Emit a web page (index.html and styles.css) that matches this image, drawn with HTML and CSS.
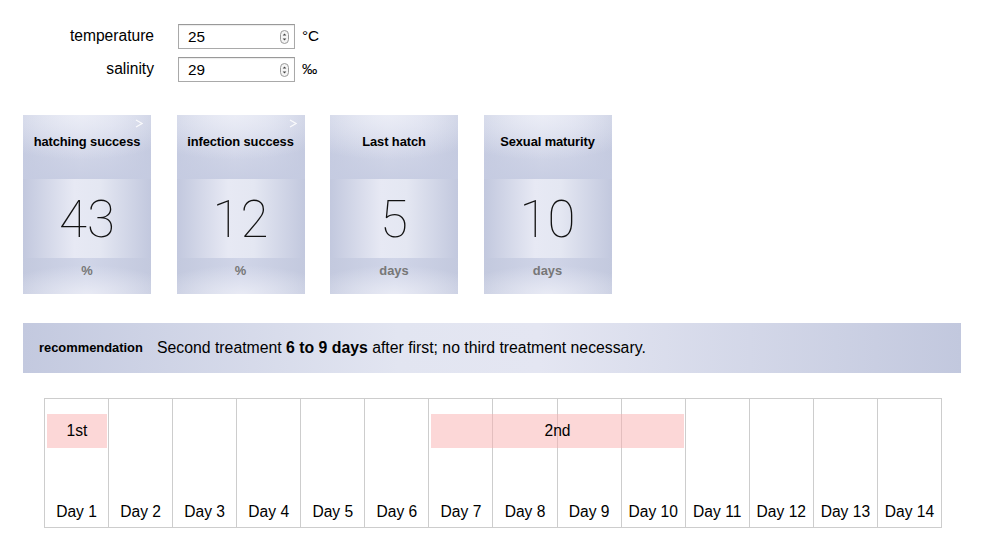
FILE: index.html
```html
<!DOCTYPE html>
<html>
<head>
<meta charset="utf-8">
<link rel="stylesheet" href="styles.css">
</head>
<body>
<div class="params">
  <div class="param-row">
    <span class="param-label">temperature</span>
    <div class="num-input"><span class="num-val">25</span>
      <svg class="spin" width="9" height="14" viewBox="0 0 9 14"><rect x="0.5" y="0.5" width="8" height="13" rx="4" fill="#f4f4f4" stroke="#9a9a9a"/><path d="M2.7 5.6 L4.5 3.4 L6.3 5.6 Z" fill="#444"/><path d="M2.7 8.4 L4.5 10.6 L6.3 8.4 Z" fill="#444"/></svg>
    </div>
    <span class="param-unit">°C</span>
  </div>
  <div class="param-row">
    <span class="param-label">salinity</span>
    <div class="num-input"><span class="num-val">29</span>
      <svg class="spin" width="9" height="14" viewBox="0 0 9 14"><rect x="0.5" y="0.5" width="8" height="13" rx="4" fill="#f4f4f4" stroke="#9a9a9a"/><path d="M2.7 5.6 L4.5 3.4 L6.3 5.6 Z" fill="#444"/><path d="M2.7 8.4 L4.5 10.6 L6.3 8.4 Z" fill="#444"/></svg>
    </div>
    <span class="param-unit">‰</span>
  </div>
</div>

<div class="cards">
  <div class="card">
    <div class="card-head">hatching success
      <svg class="chev" width="8" height="9" viewBox="0 0 8 9"><path d="M1 1 L7 4.5 L1 8" fill="none" stroke="#fff" stroke-width="1.3"/></svg>
    </div>
    <div class="card-value">43</div>
    <div class="card-unit">%</div>
  </div>
  <div class="card">
    <div class="card-head">infection success
      <svg class="chev" width="8" height="9" viewBox="0 0 8 9"><path d="M1 1 L7 4.5 L1 8" fill="none" stroke="#fff" stroke-width="1.3"/></svg>
    </div>
    <div class="card-value">12</div>
    <div class="card-unit">%</div>
  </div>
  <div class="card">
    <div class="card-head">Last hatch</div>
    <div class="card-value">5</div>
    <div class="card-unit">days</div>
  </div>
  <div class="card">
    <div class="card-head">Sexual maturity</div>
    <div class="card-value">10</div>
    <div class="card-unit">days</div>
  </div>
</div>

<div class="recommendation">
  <span class="rec-label">recommendation</span>
  <span class="rec-text">Second treatment <b>6 to 9 days</b> after first; no third treatment necessary.</span>
</div>

<div class="timeline">
  <div class="day">Day 1</div>
  <div class="day">Day 2</div>
  <div class="day">Day 3</div>
  <div class="day">Day 4</div>
  <div class="day">Day 5</div>
  <div class="day">Day 6</div>
  <div class="day">Day 7</div>
  <div class="day">Day 8</div>
  <div class="day">Day 9</div>
  <div class="day">Day 10</div>
  <div class="day">Day 11</div>
  <div class="day">Day 12</div>
  <div class="day">Day 13</div>
  <div class="day">Day 14</div>
  <div class="treat treat-1">1st</div>
  <div class="treat treat-2">2nd</div>
</div>
</body>
</html>
```

FILE: styles.css
```css
html, body {
  margin: 0;
  padding: 0;
  background: #fff;
}
body {
  font-family: "Liberation Sans", Arial, sans-serif;
  color: #000;
  width: 983px;
}

.params {
  padding-top: 24px;
  display: flex;
  flex-direction: column;
  gap: 8px;
}
.param-row {
  display: flex;
  align-items: center;
  height: 25px;
}
.param-label {
  width: 154px;
  text-align: right;
  font-size: 15.6px;
  margin-right: 24px;
  margin-top: -2px;
}
.num-input {
  box-sizing: border-box;
  width: 117px;
  height: 25px;
  border: 1px solid #a9a9a9;
  border-top-color: #999;
  box-shadow: inset 0 1px 1px rgba(0,0,0,0.08);
  display: flex;
  align-items: center;
  justify-content: space-between;
  padding: 0 5px 0 9px;
  font-size: 15.3px;
}
.spin { display: block; }
.param-unit {
  margin-left: 7px;
  font-size: 15.3px;
  margin-top: -2px;
}

.cards {
  display: flex;
  gap: 25.5px;
  margin: 33px 0 0 23px;
}
.card {
  width: 128px;
  height: 179px;
  display: flex;
  flex-direction: column;
  background: linear-gradient(90deg, #c2c8de 0%, #e7e9f4 40%, #e4e7f2 60%, #c2c8de 100%);
}
.card-head {
  position: relative;
  height: 64px;
  box-sizing: border-box;
  padding-top: 19px;
  text-align: center;
  font-weight: bold;
  font-size: 12.9px;
  letter-spacing: -0.1px;
  white-space: nowrap;
  background:
    radial-gradient(ellipse 90% 70% at 45% 0%, rgba(236,238,247,0.9) 0%, rgba(236,238,247,0) 100%),
    linear-gradient(180deg, rgba(197,203,225,0) 0%, rgba(197,203,225,0.85) 100%),
    linear-gradient(90deg, #c6cce1 0%, #dde0ee 45%, #d6daeb 70%, #c4cadf 100%);
}
.chev {
  position: absolute;
  right: 8px;
  top: 4px;
  opacity: 0.85;
}
.card-value {
  height: 79px;
  display: flex;
  align-items: center;
  justify-content: center;
  font-family: Roboto, "Liberation Sans", sans-serif;
  font-weight: 100;
  font-size: 51px;
  color: #111;
  padding-top: 2px;
  box-sizing: border-box;
}
.card-unit {
  flex: 1;
  display: flex;
  justify-content: center;
  padding-top: 5px;
  box-sizing: border-box;
  font-weight: bold;
  font-size: 12.9px;
  color: #777;
  background:
    radial-gradient(ellipse 70% 80% at 50% 100%, rgba(233,235,245,0.95) 0%, rgba(233,235,245,0) 100%),
    linear-gradient(90deg, #c3c9de 0%, #d0d5e8 50%, #c3c9de 100%);
}

.recommendation {
  margin: 29px 0 0 23px;
  width: 938px;
  height: 50px;
  display: flex;
  align-items: center;
  background: linear-gradient(90deg, #c3c9df 0%, #e2e5f1 40%, #e4e6f2 55%, #c2c8de 100%);
}
.rec-label {
  margin-left: 16px;
  width: 118px;
  font-weight: bold;
  font-size: 12.9px;
  margin-top: -2px;
}
.rec-text {
  font-size: 15.8px;
  margin-top: -1px;
}

.timeline {
  position: relative;
  margin: 25px 0 0 44px;
  width: 898px;
  height: 130px;
  box-sizing: border-box;
  display: grid;
  grid-template-columns: repeat(14, 1fr);
  border-top: 1px solid #cdcdcd;
  border-left: 1px solid #cdcdcd;
  border-bottom: 1px solid #cdcdcd;
}
.day {
  border-right: 1px solid #cdcdcd;
  display: flex;
  align-items: flex-end;
  justify-content: center;
  padding-bottom: 6px;
  font-size: 15.6px;
}
.treat {
  position: absolute;
  top: 15px;
  height: 34px;
  display: flex;
  align-items: center;
  justify-content: center;
  font-size: 15.6px;
  background: rgba(250, 175, 175, 0.5);
}
.treat-1 { left: 2px; width: 60px; }
.treat-2 { left: 386px; width: 253px; }
```
